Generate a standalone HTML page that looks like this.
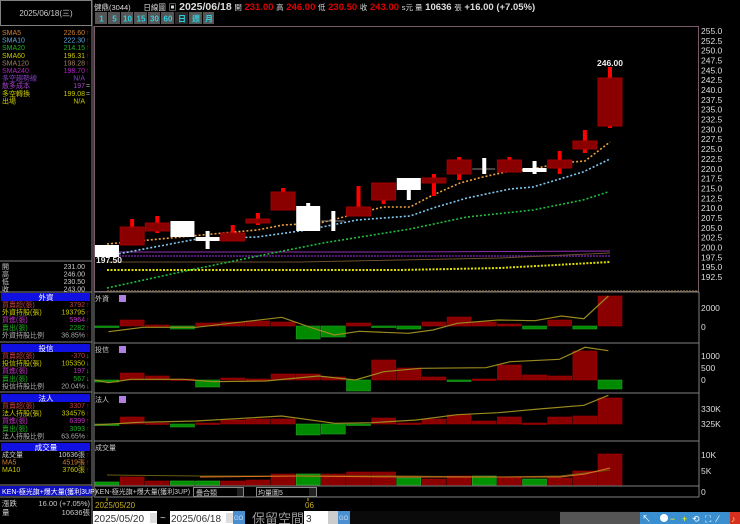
<!DOCTYPE html>
<html><head><meta charset="utf-8">
<style>
html,body{margin:0;padding:0;background:#000;width:740px;height:524px;overflow:hidden}
svg{display:block}
text{font-family:"Liberation Sans","Noto Sans CJK TC",sans-serif}
</style></head>
<body>
<svg id="s" width="740" height="524" viewBox="0 0 740 524" xmlns="http://www.w3.org/2000/svg">
<rect width="740" height="524" fill="#000"/>
<g stroke="#808080" fill="none" stroke-width="1">
<rect x="0.5" y="0.5" width="91" height="25"/>
<line x1="92" y1="0" x2="92" y2="524"/>
<line x1="0" y1="261" x2="92" y2="261"/>
<line x1="0" y1="292" x2="92" y2="292"/>
<line x1="0" y1="342" x2="92" y2="342"/>
<line x1="0" y1="392" x2="92" y2="392"/>
<line x1="0" y1="441" x2="92" y2="441"/>
<line x1="0" y1="485" x2="92" y2="485"/>
<line x1="0" y1="497" x2="92" y2="497"/>
</g>
<line x1="94" y1="26" x2="94" y2="497" stroke="#808080"/>
<rect x="94.5" y="26.5" width="604" height="265" fill="none" stroke="#7a5a6a"/>
<g stroke="#808080">
<line x1="94" y1="292" x2="699" y2="292"/>
<line x1="94" y1="343" x2="699" y2="343"/>
<line x1="94" y1="393" x2="699" y2="393"/>
<line x1="94" y1="441" x2="699" y2="441"/>
<line x1="94" y1="486" x2="699" y2="486"/>
<line x1="94" y1="497" x2="699" y2="497"/>
<line x1="699" y1="292" x2="699" y2="497"/>
</g>
<text x="46" y="16" fill="#ccc" font-size="8" text-anchor="middle">2025/06/18(三)</text>
<text x="94" y="10" font-size="9.5" fill="#ddd" font-weight="bold"><tspan font-size="7.5" font-weight="normal">健鼎(3044)</tspan> <tspan dx="10" font-size="7.5" font-weight="normal">日線圖</tspan> <tspan font-size="8">▣</tspan> <tspan font-size="10.5">2025/06/18</tspan> <tspan font-size="7.5" font-weight="normal">開</tspan> <tspan fill="#e00000">231.00</tspan> <tspan font-size="7.5" font-weight="normal">高</tspan> <tspan fill="#e00000">246.00</tspan> <tspan font-size="7.5" font-weight="normal">低</tspan> <tspan fill="#e00000">230.50</tspan> <tspan font-size="7.5" font-weight="normal">收</tspan> <tspan fill="#e00000">243.00</tspan> <tspan font-size="7.5" font-weight="normal">s元 量</tspan> 10636 <tspan font-size="7.5" font-weight="normal">張</tspan> +16.00 (+7.05%)</text>
<g id="btns"></g>
<g id="left"></g>
<g id="chart"></g>
<g id="axis" font-size="8.5" fill="#ddd"></g>
<rect x="0" y="486" width="92" height="10" fill="#1010c0"/>
<text x="2" y="494" font-size="7" fill="#fff">KEN-極光旗+爆大量(獲利3UP)</text>
<text x="2" y="506" font-size="7.5" fill="#ccc">漲跌</text>
<text x="90" y="506" font-size="7.5" fill="#ccc" text-anchor="end">16.00 (+7.05%)</text>
<text x="2" y="515" font-size="7.5" fill="#ccc">量</text>
<text x="90" y="515" font-size="7.5" fill="#ccc" text-anchor="end">10636張</text>
<text x="95" y="494" font-size="7" fill="#ccc">KEN-極光旗+爆大量(獲利3UP)</text>
<rect x="193.5" y="487.5" width="50" height="9" fill="#000" stroke="#888"/>
<text x="196" y="495" font-size="7" fill="#ccc">疊合類</text>
<rect x="237" y="488" width="6" height="8" fill="#222"/>
<rect x="256.5" y="487.5" width="60" height="9" fill="#000" stroke="#888"/>
<text x="258" y="495" font-size="7" fill="#ccc">均量圖5</text>
<rect x="309" y="488" width="7" height="8" fill="#222"/>
<text x="95" y="508" font-size="8" fill="#c8b020">2025/05/20</text>
<line x1="107" y1="498" x2="107" y2="501" stroke="#c8b020"/>
<text x="305" y="508" font-size="8" fill="#c8b020">06</text>
<line x1="308" y1="498" x2="308" y2="501" stroke="#c8b020"/>
<rect x="93" y="511" width="64" height="13" fill="#fff"/>
<text x="94" y="522" font-size="10" fill="#333">2025/05/20</text>
<rect x="150" y="513" width="7" height="10" fill="#ddd"/>
<text x="160" y="521" font-size="10" fill="#ccc">~</text>
<rect x="170" y="511" width="63" height="13" fill="#fff"/>
<text x="171" y="522" font-size="10" fill="#333">2025/06/18</text>
<rect x="226" y="513" width="7" height="10" fill="#ddd"/>
<rect x="233" y="511" width="12" height="13" fill="#4a90d0"/>
<text x="234" y="520" font-size="6" fill="#cde">GO</text>
<text x="252" y="523" font-size="13" fill="#999">保留空間</text>
<rect x="304" y="511" width="24" height="13" fill="#fff"/>
<text x="306" y="522" font-size="10" fill="#333">3</text>
<rect x="328" y="511" width="10" height="13" fill="#ccc"/>
<rect x="338" y="511" width="12" height="13" fill="#4a90d0"/>
<text x="339" y="520" font-size="6" fill="#cde">GO</text>
<rect x="350" y="511" width="290" height="13" fill="#0a0a0a"/>
<rect x="560" y="512" width="80" height="12" fill="#555"/>
<rect x="640" y="512" width="90" height="12" fill="#3a8fd0"/>
<rect x="730" y="512" width="10" height="12" fill="#d83020"/>
<g fill="#fff" font-size="9">
<text x="642" y="522">↖</text><circle cx="664" cy="518" r="4" fill="#fff"/><text x="670" y="522" fill="#ff0">−</text><text x="682" y="522" fill="#ff0">+</text><text x="692" y="522">⟲</text><text x="705" y="522">⛶</text><text x="717" y="522">⁄</text><text x="731" y="522" fill="#ffd060">♪</text>
</g>
</svg>
<script>
const NS="http://www.w3.org/2000/svg";
function el(p,t,a,txt){const e=document.createElementNS(NS,t);for(const k in a)e.setAttribute(k,a[k]);if(txt!==undefined)e.textContent=txt;p.appendChild(e);return e;}
const B=document.getElementById('btns');
[["1",95,108],["5",108,121],["10",121,134],["15",134,148],["30",148,161],["60",161,175],["日",175,189],["週",189,203],["月",203,215]].forEach(b=>{
 el(B,'rect',{x:b[1],y:12,width:b[2]-b[1]-1,height:12,fill:b[0]=="日"?"#2a2a2a":"#555"});
 el(B,'text',{x:(b[1]+b[2])/2,y:21.5,'font-size':8,fill:"#30d0e0",'text-anchor':'middle','font-weight':'bold'},b[0]);
});
const L=document.getElementById('left');
function row(y,lab,val,c,arr,ac){el(L,'text',{x:2,y:y,'font-size':7,fill:c},lab);el(L,'text',{x:85,y:y,'font-size':7,fill:c,'text-anchor':'end'},val);if(arr)el(L,'text',{x:86,y:y,'font-size':7,fill:ac||"#e00000"},arr);}
[["SMA5","226.60","#d08030"],["SMA10","222.30","#60a8d8"],["SMA20","214.15","#20b020"],["SMA60","196.31","#c8c800"],["SMA120","198.28","#a08060"],["SMA240","198.70","#b020c0"]].forEach((r,i)=>row(35+i*7.6,r[0],r[1],r[2],"↑"));
row(35+6*7.6,"多空趨勢線","N/A","#8040c0");
row(35+7*7.6,"散多成本","197","#a040c0","=","#aaa");
row(35+8*7.6,"多空轉換","199.08","#c8c800","=","#aaa");
row(35+9*7.6,"出場","N/A","#c8c800");
[["開","231.00"],["高","246.00"],["低","230.50"],["收","243.00"]].forEach((r,i)=>row(269+i*7.5,r[0],r[1],"#ccc"));
function hdr(y,t){el(L,'rect',{x:1,y:y,width:89,height:8,fill:"#1010e0"});el(L,'text',{x:46,y:y+7,'font-size':7.5,fill:"#fff",'text-anchor':'middle'},t);}
hdr(293,"外資");
[["買賣超(張)","3792","#c04040"],["外資持股(張)","193795","#c8c800"],["買進(張)","5964","#c030c0"],["賣出(張)","2282","#20b020"],["外資持股比例","36.85%","#aaa"]].forEach((r,i)=>row(307+i*7.6,r[0],r[1],r[2],"↑"));
hdr(344,"投信");
[["買賣超(張)","-370","#c04040"],["投信持股(張)","105350","#c8c800"],["買進(張)","197","#c030c0"],["賣出(張)","567","#20b020"],["投信持股比例","20.04%","#aaa"]].forEach((r,i)=>row(358+i*7.6,r[0],r[1],r[2],"↓","#20c020"));
hdr(394,"法人");
[["買賣超(張)","3307","#c04040"],["法人持股(張)","334576","#c8c800"],["買進(張)","6399","#c030c0"],["賣出(張)","3093","#20b020"],["法人持股比例","63.65%","#aaa"]].forEach((r,i)=>row(408+i*7.6,r[0],r[1],r[2],"↑"));
hdr(443,"成交量");
[["成交量","10636張","#ccc"],["MA5","4519張","#d08030"],["MA10","3760張","#c8c800"]].forEach((r,i)=>row(457+i*7.6,r[0],r[1],r[2],"↑"));

const C=document.getElementById('chart');
const X=i=>95+i*25.15;
function poly(pts,c,dash,w){el(C,'polyline',{points:pts.map(p=>p.join(',')).join(' '),fill:'none',stroke:c,'stroke-width':w||1.3,'stroke-dasharray':dash||''});}
poly([[107,252],[400,252],[610,251]],"#9030b0","",1);
poly([[107,256],[610,256]],"#7020a0","2,1",1.5);
poly([[107,262],[300,262],[500,258],[610,253]],"#6a5030","",1);
poly([[107,270],[400,270],[500,268],[610,262]],"#e0e000","2,1.5",2);
poly([[107,288],[190,270],[273,253],[323,243],[410,229],[467,217],[533,210],[583,200],[608,192]],"#20c040","2,2",1.6);
poly([[107,256],[197,239],[257,237],[307,230],[357,220],[410,216],[433,208],[467,198],[510,189],[533,187],[583,172],[610,159]],"#80c8f0","2,2",1.6);
poly([[107,244],[223,233],[257,230],[283,225],[320,223],[383,207],[410,207],[433,195],[460,183],[483,177],[510,171],[533,169],[560,163],[585,161],[610,142]],"#f0a040","2,2",1.6);
poly([[107,291],[698,291]],"#8a7040","2,1",1.2);
const cd=[[245,257,245,257,'w'],[227,245,219,245,'r'],[223,231,216,233,'r'],[221,237,221,237,'w'],[237,241,231,249,'w'],[233,241,225,241,'r'],[219,223,213,225,'r'],[192,210,188,210,'r'],[206,231,203,231,'w'],[0,0,211,231,'t',221],[207,216,186,216,'r'],[183,200,183,204,'r'],[178,190,178,200,'w'],[178,183,174,196,'r'],[160,174,157,180,'r'],[0,0,158,174,'t',169],[160,172,157,172,'r'],[168,172,161,174,'w'],[160,168,151,174,'r'],[141,149,130,153,'r'],[78,126,67,128,'r']];
cd.forEach((c,i)=>{const x=X(i),cx=x+12;
 if(c[4]=='t'){el(C,'line',{x1:x,y1:c[5],x2:x+23,y2:c[5],stroke:'#888','stroke-width':1});el(C,'rect',{x:cx-2,y:c[2],width:4,height:c[3]-c[2],fill:'#fff'});return;}
 const col=c[4]=='r'?'#ff0000':'#fff',body=c[4]=='r'?'#8a0000':'#fff';
 el(C,'rect',{x:cx-2,y:c[2],width:4,height:c[3]-c[2],fill:col});
 el(C,'rect',{x:x,y:c[0],width:24,height:Math.max(c[1]-c[0],3),fill:body,stroke:c[4]=='r'?'#a00000':'none'});
});
el(C,'text',{x:610,y:66,'font-size':8.5,fill:'#eee','text-anchor':'middle','font-weight':'bold'},"246.00");
el(C,'text',{x:96,y:263,'font-size':8.5,fill:'#eee','font-weight':'bold'},"197.50");
function panel(base,vals,line,label){
 el(C,'text',{x:95,y:base.top+8,'font-size':7,fill:'#ccc'},label);
 el(C,'rect',{x:119,y:base.top+2,width:7,height:7,fill:'#b080e0'});
 vals.forEach((v,i)=>{const x=X(i);const up=v<base.y;const y=Math.min(v,base.y),h=Math.max(Math.abs(v-base.y),1.5);
  el(C,'rect',{x:x,y:y,width:24,height:h,fill:up?'#8a0000':'#008a00',stroke:up?'#a00000':'#20a020','stroke-width':0.6});});
 el(C,'polyline',{points:line.map(p=>(90+p[0]/2.45).toFixed(1)+','+(290+p[1]/3).toFixed(1)).join(' '),fill:'none',stroke:'#9a8a20','stroke-width':1.2});
}
panel({y:326,top:293},[326.5,320,325,329,323,322,321,322,339,337,323,327,329,322,317,322,324,329,320,329,296],[[45,125],[130,112],[260,112],[470,82],[540,112],[598,135],[660,124],[780,130],[840,120],[900,100],[1000,90],[1090,92],[1155,78],[1210,86],[1270,18]],"外資");
panel({y:380,top:344},[382,373,376,379,387,378,379,374,374,377,391,360,368,377,381,379,365,375,376,351,389],[[12,270],[45,278],[100,268],[230,268],[300,275],[430,273],[560,258],[650,270],[720,245],[810,235],[970,233],[1030,215],[1150,208],[1213,172],[1270,182]],"投信");
panel({y:424,top:394},[425.5,417,423,427,423,420,419,419,435,434,425.5,418,423,419,415,421,417,423,417,416,398],[[12,405],[120,397],[260,393],[470,378],[600,400],[690,398],[800,390],[900,374],[1000,368],[1100,357],[1210,346],[1270,316]],"法人");
el(C,'text',{x:95,y:450,'font-size':7,fill:'#ccc'},"成交量");
const vol21=[[482,'g'],[477,'r'],[481,'r'],[481,'g'],[481,'g'],[481,'r'],[480,'r'],[474,'r'],[474,'g'],[474,'r'],[472,'r'],[472,'r'],[478,'g'],[479,'r'],[476,'r'],[476,'g'],[478,'r'],[479,'g'],[478,'r'],[471,'r'],[454,'r']];
vol21.forEach((v,i)=>{el(C,'rect',{x:X(i),y:v[0],width:24,height:485-v[0],fill:v[1]=='r'?'#8a0000':'#009000',stroke:v[1]=='r'?'#a00000':'#30b030','stroke-width':0.6});});
el(C,'polyline',{points:"107,475 200,476 300,476 400,476 500,477 560,476 610,470",fill:'none',stroke:'#6a5a10','stroke-width':1});
el(C,'polyline',{points:"200,477 300,476 400,477 500,477 560,477 585,474 610,468",fill:'none',stroke:'#e07020','stroke-width':1});
const A=document.getElementById('axis');
for(let i=0;i<26;i++){const p=255-i*2.5;el(A,'text',{x:701,y:34+i*9.84},p.toFixed(1));}
[[311,"2000"],[330,"0"],[359,"1000"],[371,"500"],[383,"0"],[412,"330K"],[427,"325K"],[458,"10K"],[474,"5K"],[495,"0"]].forEach(a=>el(A,'text',{x:701,y:a[0]},a[1]));
</script>
</body></html>
